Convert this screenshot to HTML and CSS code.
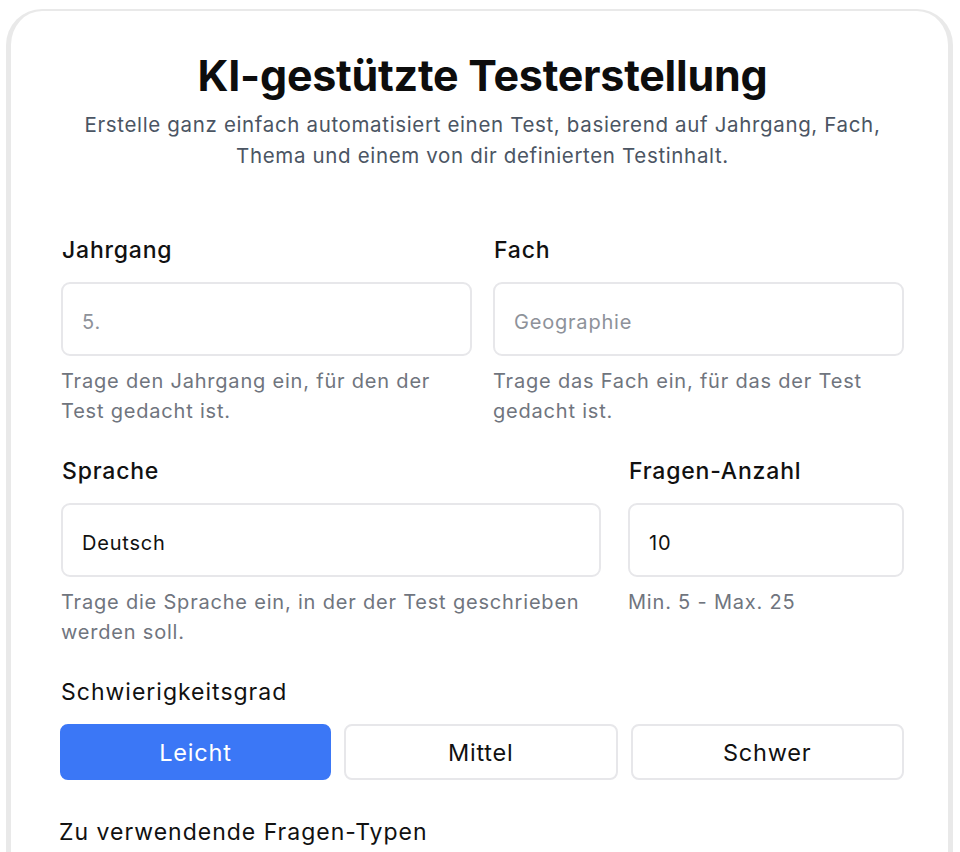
FILE: index.html
```html
<!DOCTYPE html>
<html lang="de">
<head>
<meta charset="UTF-8">
<meta name="viewport" content="width=device-width, initial-scale=1.0">
<title>KI-gestützte Testerstellung</title>
<link rel="stylesheet" href="styles.css">
</head>
<body>
<div class="card">
	<div class="head">
		<h1 class="title">KI-gestützte Testerstellung</h1>
		<p class="lead">Erstelle ganz einfach automatisiert einen Test, basierend auf Jahrgang, Fach, Thema und einem von dir definierten Testinhalt.</p>
	</div>

	<div class="row row-half">
		<div class="field">
			<label class="label" for="jahrgang">Jahrgang</label>
			<input class="input" id="jahrgang" type="text" placeholder="5.">
			<p class="hint">Trage den Jahrgang ein, für den der Test gedacht ist.</p>
		</div>
		<div class="field">
			<label class="label" for="fach">Fach</label>
			<input class="input" id="fach" type="text" placeholder="Geographie">
			<p class="hint">Trage das Fach ein, für das der Test gedacht ist.</p>
		</div>
	</div>

	<div class="row row-wide">
		<div class="field">
			<label class="label" for="sprache">Sprache</label>
			<input class="input" id="sprache" type="text" value="Deutsch">
			<p class="hint">Trage die Sprache ein, in der der Test geschrieben werden soll.</p>
		</div>
		<div class="field">
			<label class="label" for="anzahl">Fragen-Anzahl</label>
			<input class="input" id="anzahl" type="text" value="10">
			<p class="hint">Min. 5 - Max. 25</p>
		</div>
	</div>

	<div class="level">
		<div class="label label-plain">Schwierigkeitsgrad</div>
		<div class="choices">
			<button class="choice active">Leicht</button>
			<button class="choice">Mittel</button>
			<button class="choice">Schwer</button>
		</div>
	</div>

	<div class="label label-plain types">Zu verwendende Fragen-Typen</div>
</div>
</body>
</html>
```

FILE: styles.css
```css
*{
	margin: 0;
	padding: 0;
	box-sizing: border-box;
}
html,body{
	width: 100%;
	background-color: #ffffff;
}
body{
	font-family: Inter, "Noto Sans", sans-serif;
	color: #111111;
}

.card{
	margin: 9px 7px 0 6px;
	border: 5px solid #e9e9e9;
	border-top-width: 2px;
	border-bottom: none;
	border-radius: 36px 36px 0 0;
	padding: 0 44px 40px 50px;
	min-height: 860px;
}

.head{
	text-align: center;
	padding-top: 38px;
}
.title{
	font-size: 43px;
	line-height: 52px;
	font-weight: 700;
	letter-spacing: -0.25px;
	color: #0d0d0d;
}
.lead{
	margin: 8px auto 0;
	font-size: 20.5px;
	line-height: 31px;
	letter-spacing: 0.65px;
	color: #4b5563;
	max-width: 830px;
}

.row{
	display: grid;
	margin-top: 31px;
}
.row-half{
	margin-top: 65px;
	grid-template-columns: 1fr 1fr;
	column-gap: 21px;
}
.row-wide{
	grid-template-columns: 1fr 276px;
	column-gap: 27px;
}

.label{
	display: block;
	font-size: 23px;
	line-height: 28px;
	font-weight: 500;
	letter-spacing: 0.8px;
	color: #111111;
	padding-left: 1px;
}
.label-plain{
	font-weight: 400;
	letter-spacing: 1px;
	padding-left: 0;
}

.input{
	display: block;
	width: 100%;
	height: 74px;
	margin-top: 18px;
	padding: 5px 19px 0;
	border: 2px solid #e7e7ea;
	border-radius: 9px;
	font-family: inherit;
	font-size: 20px;
	letter-spacing: 0.8px;
	color: #111111;
	background: #ffffff;
	outline: none;
}
.input::placeholder{
	color: #8e929a;
}

.hint{
	margin-top: 10px;
	font-size: 20px;
	line-height: 30px;
	letter-spacing: 0.8px;
	color: #70757e;
}

.level{
	margin-top: 31px;
}
.choices{
	display: grid;
	grid-template-columns: 271px 1fr 1fr;
	column-gap: 13px;
	margin-top: 18px;
	margin-left: -1px;
}
.choice{
	height: 56px;
	border: 2px solid #e7e7ea;
	border-radius: 8px;
	background: #ffffff;
	font-family: inherit;
	font-size: 23.5px;
	letter-spacing: 0.8px;
	color: #111111;
	cursor: pointer;
}
.choice.active{
	background-color: #3b77f6;
	border-color: #3b77f6;
	color: #ffffff;
}

.types{
	margin-top: 38px;
	margin-left: -2px;
}
```
